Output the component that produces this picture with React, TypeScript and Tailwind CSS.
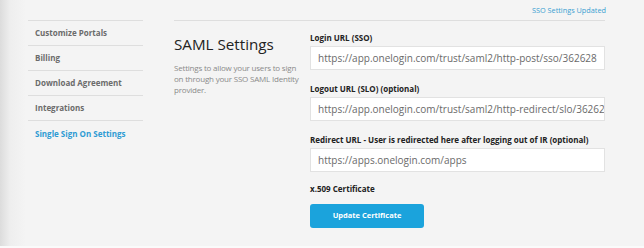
const menu = ['Customize Portals', 'Billing', 'Download Agreement', 'Integrations', 'Single Sign On Settings']

const fields = [
  { label: 'Login URL (SSO)', value: 'https://app.onelogin.com/trust/saml2/http-post/sso/362628' },
  { label: 'Logout URL (SLO) (optional)', value: 'https://app.onelogin.com/trust/saml2/http-redirect/slo/362628' },
  { label: 'Redirect URL - User is redirected here after logging out of IR (optional)', value: 'https://apps.onelogin.com/apps' },
]

export default function App() {
  return (
    <div
      className="w-[644px] h-[248px] overflow-hidden bg-[linear-gradient(to_right,#dcdcdc_0px,#eeeeee_10px,#f4f4f4_26px)] border-b-2 border-[#fafafa]"
      style={{ fontFamily: '"Open Sans", "Liberation Sans", sans-serif' }}
    >
      <div className="h-[20px] flex justify-end items-center pr-[38px]">
        <span className="text-[7.3px] text-[#3a9fd2]">SSO Settings Updated</span>
      </div>
      <div className="flex pl-[28px]">
        <aside className="w-[115px] border-t border-[#dedede]">
          {menu.map((m, i) => (
            <div
              key={m}
              className={`h-[25px] flex items-center pl-[7px] text-[8px] font-bold ${i < menu.length - 1 ? 'border-b border-[#dedede]' : ''} ${i === menu.length - 1 ? 'text-[#2e9bd3]' : 'text-[#6b6b6b]'}`}
            >
              {m}
            </div>
          ))}
        </aside>
        <main className="ml-[31px] w-[431px] border-t border-[#dedede] flex">
          <div className="w-[136px] pt-[11px]">
            <h1 className="text-[15.2px] leading-[24px] text-[#222]">SAML Settings</h1>
            <p className="mt-[6px] w-[128px] text-[8px] leading-[11px] tracking-[-0.2px] text-[#8a8a8a]">
              Settings to allow your users to sign on through your SSO SAML Identity provider.
            </p>
          </div>
          <div className="w-[295px] pt-[11px]">
            {fields.map((f, i) => (
              <div key={f.label} className={i > 0 ? 'mt-[13px]' : ''}>
                <div className="text-[8px] leading-[12px] font-bold text-[#222]">{f.label}</div>
                <div className="mt-[2px] h-[24px] bg-white border border-[#e2e2e2] flex items-center pl-[7px] overflow-hidden whitespace-nowrap text-[10px] text-[#6a6a6a]">
                  {f.value}
                </div>
              </div>
            ))}
            <div className="mt-[11px] text-[8px] leading-[12px] font-bold text-[#222]">x.509 Certificate</div>
            <button className="mt-[9px] w-[114px] h-[24px] rounded-[3px] bg-[#1ba3dc] text-white text-[7.5px] font-bold">
              Update Certificate
            </button>
          </div>
        </main>
      </div>
    </div>
  )
}
